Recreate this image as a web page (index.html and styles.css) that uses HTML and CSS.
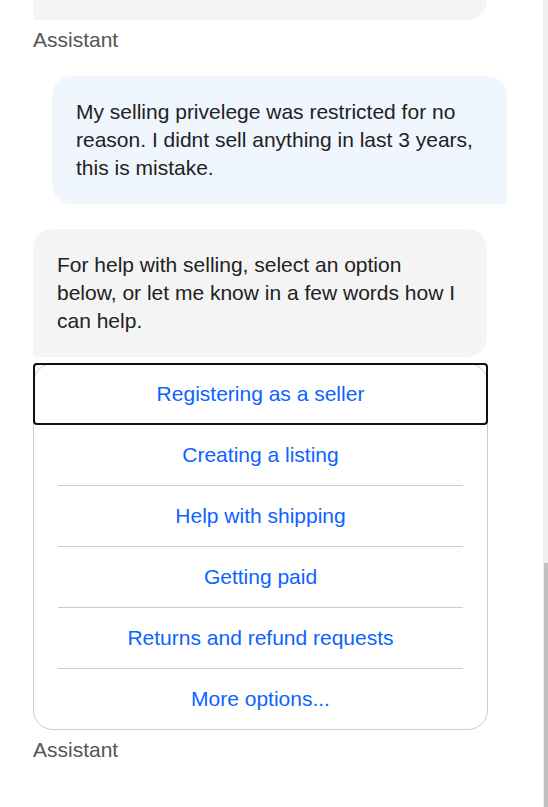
FILE: index.html
```html
<!DOCTYPE html>
<html>
<head>
<meta charset="utf-8">
<link rel="stylesheet" href="styles.css">
</head>
<body>
<div class="chat">
  <div class="msg bot-msg">
    <div class="bubble bot prev"></div>
    <div class="label">Assistant</div>
  </div>
  <div class="msg user-msg">
    <div class="bubble user">My selling privelege was restricted for no reason. I didnt sell anything in last 3 years, this is mistake.</div>
  </div>
  <div class="msg bot-msg second">
    <div class="bubble bot">For help with selling, select an option below, or let me know in a few words how I can help.</div>
    <div class="options">
      <button class="opt focused">Registering as a seller</button>
      <button class="opt">Creating a listing</button>
      <button class="opt">Help with shipping</button>
      <button class="opt">Getting paid</button>
      <button class="opt">Returns and refund requests</button>
      <button class="opt last">More options...</button>
    </div>
    <div class="label">Assistant</div>
  </div>
</div>
<div class="scrollbar"><div class="thumb"></div></div>
</body>
</html>
```

FILE: styles.css
```css
html, body {
  margin: 0;
  padding: 0;
  background: #ffffff;
  height: 807px;
  overflow: hidden;
}
body {
  font-family: "Liberation Sans", Arial, sans-serif;
  font-size: 21px;
  line-height: 28px;
  color: #222;
}
.chat {
  width: 474px;
  margin-left: 33px;
  display: flex;
  flex-direction: column;
}
.msg {
  display: flex;
  flex-direction: column;
}
.bubble {
  box-sizing: border-box;
  padding: 22px 24px;
}
.bot {
  width: 454px;
  background: #f4f4f4;
  border-radius: 20px 20px 20px 4px;
  color: #222;
  padding-right: 25px;
}
.bot.prev {
  height: 20px;
  padding: 0;
  border-radius: 0 0 20px 4px;
}
.user {
  align-self: flex-end;
  width: 455px;
  background: #eff6fd;
  border-radius: 20px 20px 4px 20px;
  margin-top: 22px;
}
.second {
  margin-top: 25px;
}
.label {
  color: #555;
  margin-top: 6px;
}
.options {
  margin-top: 6px;
  width: 455px;
  box-sizing: border-box;
  border: 1px solid #cccccc;
  border-radius: 20px;
  display: flex;
  flex-direction: column;
  position: relative;
}
.opt {
  height: 61px;
  border: none;
  background: transparent;
  font-family: "Liberation Sans", Arial, sans-serif;
  font-size: 21px;
  color: #0d63ff;
  margin: 0 24px;
  padding: 0;
  border-bottom: 1px solid #cccccc;
  text-align: center;
}
.opt.last {
  border-bottom: none;
  height: 60px;
}
.opt.focused {
  margin: -1px -1px 0 -1px;
  height: 62px;
  border: 2px solid #111;
  border-radius: 4px;
}
.scrollbar {
  position: fixed;
  top: 0;
  right: 0;
  width: 5px;
  height: 807px;
  background: #f0f0f0;
}
.thumb {
  position: absolute;
  top: 563px;
  right: 0;
  width: 4px;
  height: 244px;
  background: #c1c1c1;
}
```
